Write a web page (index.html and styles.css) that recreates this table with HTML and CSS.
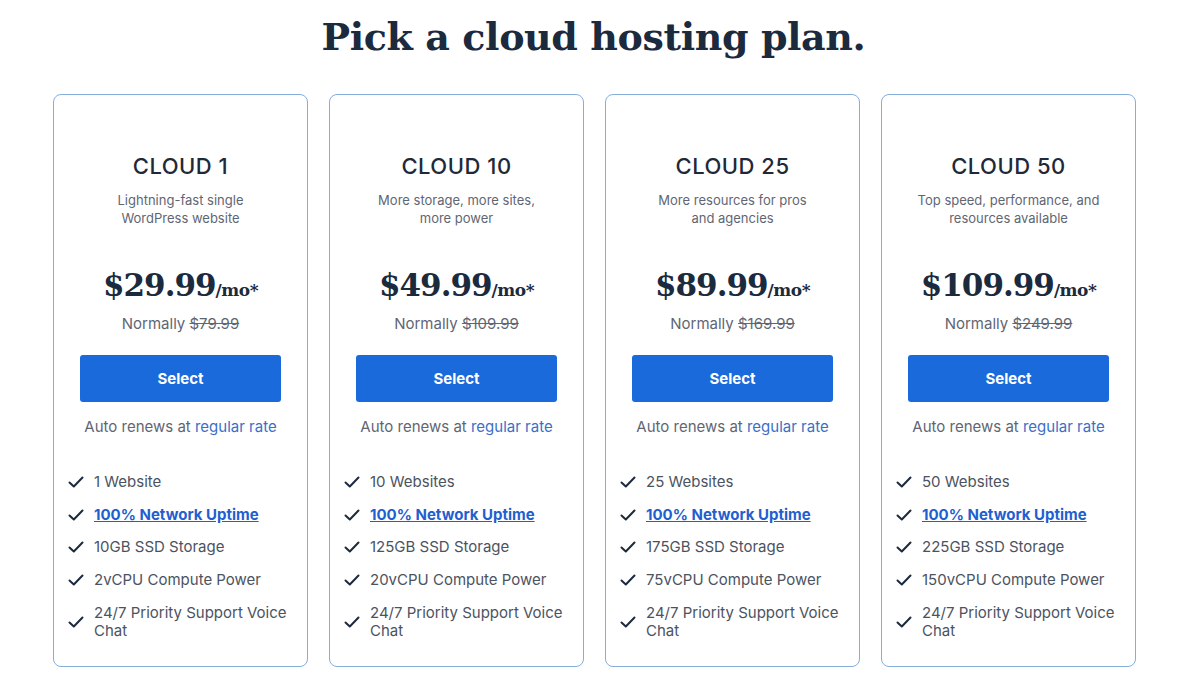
FILE: index.html
```html
<!DOCTYPE html>
<html lang="en">
<head>
  <meta charset="UTF-8" />
  <title>Cloud Hosting Plans</title>
  <link rel="stylesheet" href="styles.css">
</head>
<body>

  <h1 class="page-title">Pick a cloud hosting plan.</h1>

  <div class="plans">

    <div class="plan">
      <div class="plan-name">CLOUD 1</div>
      <div class="plan-desc">Lightning-fast single<br>WordPress website</div>
      <div class="price">$29.99<span class="per">/mo*</span></div>
      <div class="normally">Normally <s>$79.99</s></div>
      <button class="select-btn">Select</button>
      <div class="renews">Auto renews at <a href="#">regular rate</a></div>
      <ul class="features">
        <li><svg class="check" viewBox="0 0 16 16"><path d="M1.5 8.5 L5.8 12.5 L14.5 3.5"/></svg><span>1 Website</span></li>
        <li><svg class="check" viewBox="0 0 16 16"><path d="M1.5 8.5 L5.8 12.5 L14.5 3.5"/></svg><a href="#" class="uptime">100% Network Uptime</a></li>
        <li><svg class="check" viewBox="0 0 16 16"><path d="M1.5 8.5 L5.8 12.5 L14.5 3.5"/></svg><span>10GB SSD Storage</span></li>
        <li><svg class="check" viewBox="0 0 16 16"><path d="M1.5 8.5 L5.8 12.5 L14.5 3.5"/></svg><span>2vCPU Compute Power</span></li>
        <li><svg class="check" viewBox="0 0 16 16"><path d="M1.5 8.5 L5.8 12.5 L14.5 3.5"/></svg><span>24/7 Priority Support Voice Chat</span></li>
      </ul>
    </div>

    <div class="plan">
      <div class="plan-name">CLOUD 10</div>
      <div class="plan-desc">More storage, more sites,<br>more power</div>
      <div class="price">$49.99<span class="per">/mo*</span></div>
      <div class="normally">Normally <s>$109.99</s></div>
      <button class="select-btn">Select</button>
      <div class="renews">Auto renews at <a href="#">regular rate</a></div>
      <ul class="features">
        <li><svg class="check" viewBox="0 0 16 16"><path d="M1.5 8.5 L5.8 12.5 L14.5 3.5"/></svg><span>10 Websites</span></li>
        <li><svg class="check" viewBox="0 0 16 16"><path d="M1.5 8.5 L5.8 12.5 L14.5 3.5"/></svg><a href="#" class="uptime">100% Network Uptime</a></li>
        <li><svg class="check" viewBox="0 0 16 16"><path d="M1.5 8.5 L5.8 12.5 L14.5 3.5"/></svg><span>125GB SSD Storage</span></li>
        <li><svg class="check" viewBox="0 0 16 16"><path d="M1.5 8.5 L5.8 12.5 L14.5 3.5"/></svg><span>20vCPU Compute Power</span></li>
        <li><svg class="check" viewBox="0 0 16 16"><path d="M1.5 8.5 L5.8 12.5 L14.5 3.5"/></svg><span>24/7 Priority Support Voice Chat</span></li>
      </ul>
    </div>

    <div class="plan">
      <div class="plan-name">CLOUD 25</div>
      <div class="plan-desc">More resources for pros<br>and agencies</div>
      <div class="price">$89.99<span class="per">/mo*</span></div>
      <div class="normally">Normally <s>$169.99</s></div>
      <button class="select-btn">Select</button>
      <div class="renews">Auto renews at <a href="#">regular rate</a></div>
      <ul class="features">
        <li><svg class="check" viewBox="0 0 16 16"><path d="M1.5 8.5 L5.8 12.5 L14.5 3.5"/></svg><span>25 Websites</span></li>
        <li><svg class="check" viewBox="0 0 16 16"><path d="M1.5 8.5 L5.8 12.5 L14.5 3.5"/></svg><a href="#" class="uptime">100% Network Uptime</a></li>
        <li><svg class="check" viewBox="0 0 16 16"><path d="M1.5 8.5 L5.8 12.5 L14.5 3.5"/></svg><span>175GB SSD Storage</span></li>
        <li><svg class="check" viewBox="0 0 16 16"><path d="M1.5 8.5 L5.8 12.5 L14.5 3.5"/></svg><span>75vCPU Compute Power</span></li>
        <li><svg class="check" viewBox="0 0 16 16"><path d="M1.5 8.5 L5.8 12.5 L14.5 3.5"/></svg><span>24/7 Priority Support Voice Chat</span></li>
      </ul>
    </div>

    <div class="plan">
      <div class="plan-name">CLOUD 50</div>
      <div class="plan-desc">Top speed, performance, and<br>resources available</div>
      <div class="price">$109.99<span class="per">/mo*</span></div>
      <div class="normally">Normally <s>$249.99</s></div>
      <button class="select-btn">Select</button>
      <div class="renews">Auto renews at <a href="#">regular rate</a></div>
      <ul class="features">
        <li><svg class="check" viewBox="0 0 16 16"><path d="M1.5 8.5 L5.8 12.5 L14.5 3.5"/></svg><span>50 Websites</span></li>
        <li><svg class="check" viewBox="0 0 16 16"><path d="M1.5 8.5 L5.8 12.5 L14.5 3.5"/></svg><a href="#" class="uptime">100% Network Uptime</a></li>
        <li><svg class="check" viewBox="0 0 16 16"><path d="M1.5 8.5 L5.8 12.5 L14.5 3.5"/></svg><span>225GB SSD Storage</span></li>
        <li><svg class="check" viewBox="0 0 16 16"><path d="M1.5 8.5 L5.8 12.5 L14.5 3.5"/></svg><span>150vCPU Compute Power</span></li>
        <li><svg class="check" viewBox="0 0 16 16"><path d="M1.5 8.5 L5.8 12.5 L14.5 3.5"/></svg><span>24/7 Priority Support Voice Chat</span></li>
      </ul>
    </div>

  </div>

</body>
</html>
```

FILE: styles.css
```css
* {
  box-sizing: border-box;
  margin: 0;
  padding: 0;
}

body {
  font-family: 'Inter', 'Open Sans', sans-serif;
  background: #fff;
  color: #1e2a3b;
}

.page-title {
  font-family: 'DejaVu Serif', 'Liberation Serif', serif;
  font-weight: bold;
  font-size: 38px;
  line-height: 50px;
  text-align: center;
  color: #1c2a3e;
  padding-top: 12px;
  letter-spacing: -0.4px;
}

.plans {
  display: flex;
  justify-content: center;
  gap: 21px;
  margin-top: 32px;
  padding-left: 2px;
}

.plan {
  width: 255px;
  height: 573px;
  border: 1px solid #86aedb;
  border-radius: 8px;
  padding: 57px 0 0;
  text-align: center;
}

.plan-name {
  font-size: 22px;
  line-height: 28px;
  font-weight: 500;
  color: #1f2937;
  letter-spacing: 0.5px;
}

.plan-desc {
  margin-top: 11px;
  font-size: 13px;
  line-height: 18px;
  color: #5f6673;
}

.price {
  margin-top: 36px;
  font-family: 'DejaVu Serif', 'Liberation Serif', serif;
  font-weight: bold;
  font-size: 31px;
  line-height: 44px;
  color: #1c2a3e;
  letter-spacing: -1px;
}

.price .per {
  font-size: 17px;
  letter-spacing: -0.5px;
}

.normally {
  margin-top: 2px;
  font-size: 15px;
  line-height: 20px;
  color: #5f6673;
}

.normally s {
  color: #5f6673;
}

.select-btn {
  display: block;
  width: 201px;
  height: 47px;
  margin: 21px auto 0;
  background: #1b6adb;
  color: #fff;
  border: none;
  border-radius: 3px;
  font-family: inherit;
  font-weight: bold;
  font-size: 15px;
  cursor: pointer;
}

.renews {
  margin-top: 15px;
  font-size: 15px;
  line-height: 20px;
  color: #5f6673;
}

.renews a {
  color: #3b6fc7;
  text-decoration: none;
}

.features {
  list-style: none;
  margin-top: 36px;
  padding: 0 14px;
  text-align: left;
  display: flex;
  flex-direction: column;
  gap: 14.7px;
}

.features li {
  display: flex;
  align-items: center;
  gap: 10px;
  font-size: 15px;
  line-height: 18px;
  color: #4b5361;
}

.check {
  flex: none;
  width: 16px;
  height: 16px;
  fill: none;
  stroke: #1c2a3e;
  stroke-width: 2;
  stroke-linecap: round;
  stroke-linejoin: round;
}

.uptime {
  color: #1f5fcf;
  font-weight: bold;
  text-decoration: underline;
}
```
